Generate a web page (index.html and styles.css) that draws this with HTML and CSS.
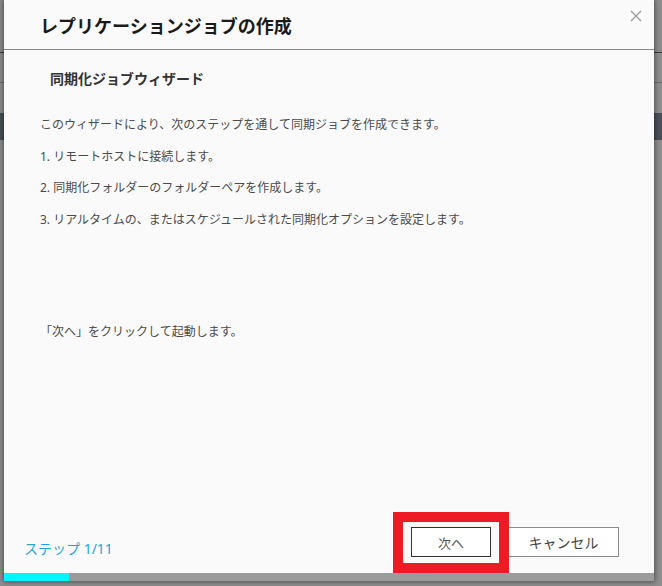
FILE: index.html
```html
<!DOCTYPE html>
<html lang="ja">
<head>
<meta charset="utf-8">
<title>レプリケーションジョブの作成</title>
<link rel="stylesheet" href="styles.css">
</head>
<body>
<div class="dialog">
  <div class="header">
    <h1 class="title">レプリケーションジョブの作成</h1>
    <span class="close" aria-label="close">
      <svg width="12" height="12" viewBox="0 0 12 12"><path d="M1 1 L11 11 M11 1 L1 11" stroke="#9a9a9a" stroke-width="1.2" fill="none"/></svg>
    </span>
  </div>
  <div class="content">
    <h2 class="subtitle">同期化ジョブウィザード</h2>
    <p class="text">このウィザードにより、次のステップを通して同期ジョブを作成できます。</p>
    <p class="text">1. リモートホストに接続します。</p>
    <p class="text">2. 同期化フォルダーのフォルダーペアを作成します。</p>
    <p class="text">3. リアルタイムの、またはスケジュールされた同期化オプションを設定します。</p>
    <p class="text start">「次へ」をクリックして起動します。</p>
  </div>
  <div class="footer">
    <span class="step">ステップ 1/11</span>
    <div class="buttons">
      <button class="btn btn-next">次へ</button>
      <button class="btn btn-cancel">キャンセル</button>
    </div>
  </div>
  <div class="progress"><div class="progress-fill"></div></div>
  <div class="highlight"></div>
</div>
</body>
</html>
```

FILE: styles.css
```css
html, body {
  margin: 0;
  padding: 0;
}
body {
  width: 662px;
  height: 586px;
  overflow: hidden;
  font-family: "Noto Sans", "Noto Sans CJK JP", sans-serif;
  background:
    linear-gradient(#8d8d8d, #8d8d8d) 0 0 / 100% 52px no-repeat,
    linear-gradient(#3a3a3a, #3a3a3a) 0 52px / 100% 1px no-repeat,
    linear-gradient(#6a6a6a, #6a6a6a) 0 82px / 100% 1px no-repeat,
    linear-gradient(#4a5059, #4a5059) 0 113px / 100% 27px no-repeat,
    #8f8f8f;
}
.dialog {
  position: relative;
  width: 650px;
  height: 581px;
  margin-left: 4px;
  background: #fafafa;
  box-shadow: 0 0 5px 1px rgba(0, 0, 0, 0.45);
  display: flex;
  flex-direction: column;
}
.header {
  position: relative;
  height: 49px;
  border-bottom: 1px solid #8a8a8a;
  display: flex;
  align-items: center;
  padding-left: 36px;
  box-sizing: content-box;
}
.title {
  margin: 0;
  font-size: 18px;
  font-weight: 700;
  color: #1a1a1a;
  line-height: 24px;
  padding-top: 2px;
}
.close {
  position: absolute;
  top: 10px;
  right: 12px;
  width: 12px;
  height: 12px;
  display: block;
}
.close svg {
  display: block;
}
.content {
  flex: 1;
  padding: 0 36px;
}
.subtitle {
  margin: 19px 0 26px 10px;
  font-size: 14px;
  font-weight: 600;
  color: #333;
  line-height: 20px;
}
.text {
  margin: 0 0 11.7px 0;
  font-size: 12px;
  line-height: 20px;
  color: #4a4a4a;
}
.text.start {
  margin-top: 92px;
}
.footer {
  height: 30px;
  padding: 0 35px 16px 20px;
  display: flex;
  justify-content: space-between;
  align-items: flex-end;
}
.step {
  font-size: 14px;
  line-height: 20px;
  color: #1fa6dd;
  margin-bottom: -2px;
}
.buttons {
  display: flex;
  gap: 17px;
}
.btn {
  height: 30px;
  background: #fff;
  font-family: "Noto Sans", "Noto Sans CJK JP", sans-serif;
  padding: 0;
  margin: 0;
  color: #555;
}
.btn-next {
  width: 80px;
  border: 1px solid #333;
  font-size: 13px;
}
.btn-cancel {
  width: 111px;
  border: 1px solid #8a8a8a;
  font-size: 14px;
  color: #444;
}
.progress {
  height: 8px;
  background: #9b9b9b;
}
.progress-fill {
  width: 65px;
  height: 100%;
  background: #00f6ff;
}
.highlight {
  position: absolute;
  left: 389px;
  top: 512px;
  width: 116px;
  height: 61px;
  border: 10px solid #ed1c24;
  box-sizing: border-box;
  pointer-events: none;
}
```
